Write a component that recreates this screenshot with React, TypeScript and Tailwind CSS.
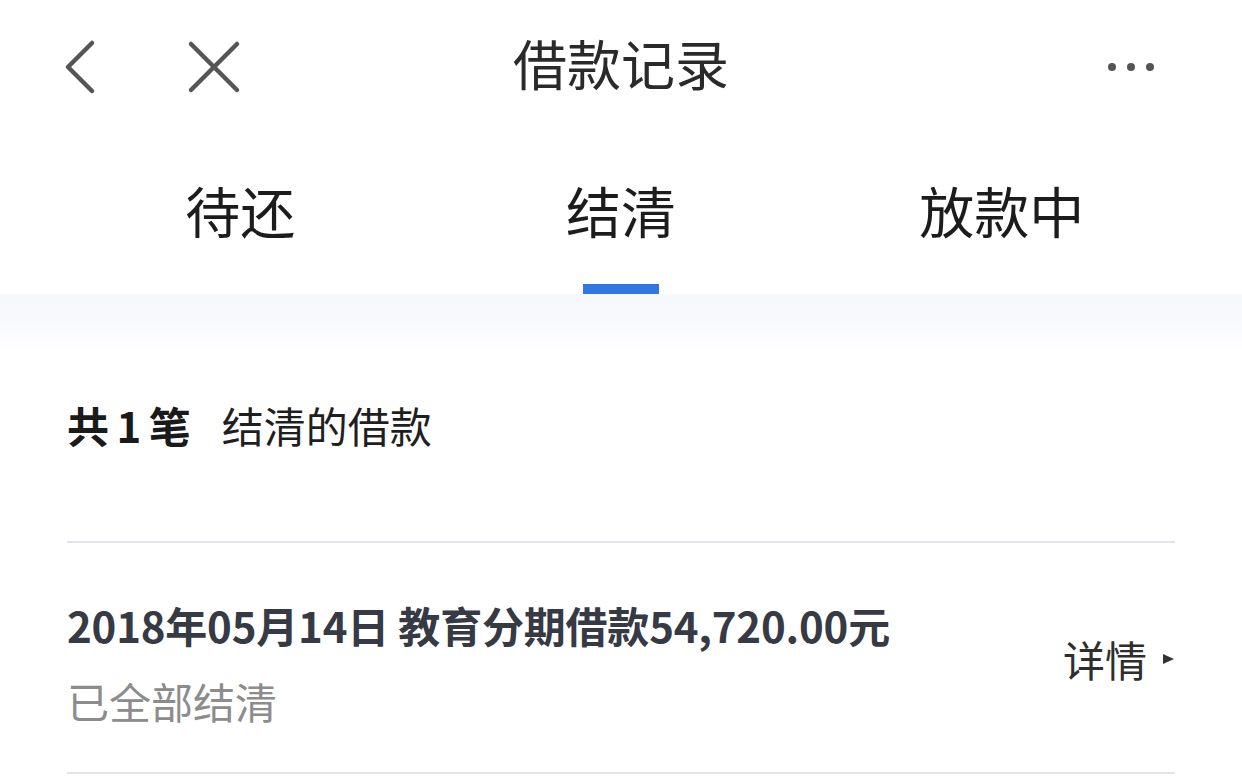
const font = { fontFamily: '"Noto Sans CJK SC", "Noto Sans", sans-serif' };

function BackIcon() {
  return (
    <svg width="40" height="60" viewBox="0 0 40 60" fill="none">
      <path d="M32 6 L8 30 L32 54" stroke="#555" strokeWidth="4.5" strokeLinecap="round" strokeLinejoin="round" />
    </svg>
  );
}

function CloseIcon() {
  return (
    <svg width="56" height="56" viewBox="0 0 56 56" fill="none">
      <path d="M5 5 L51 51 M51 5 L5 51" stroke="#555" strokeWidth="4.5" strokeLinecap="round" />
    </svg>
  );
}

const tabs = ["待还", "结清", "放款中"];

export default function App() {
  return (
    <div className="w-[1242px] h-[776px] overflow-hidden bg-white" style={font}>
      {/* header */}
      <div className="grid h-[134px] grid-cols-[1fr_auto_1fr] items-center">
        <div className="flex items-center pl-[60px]">
          <BackIcon />
          <div className="ml-[86px]">
            <CloseIcon />
          </div>
        </div>
        <div className="-mt-[8px] text-[54px] leading-none text-[#2a2a2a]">借款记录</div>
        <div className="flex items-center justify-end gap-[11px] pr-[88px]">
          <span className="size-[8px] rounded-full bg-[#555]" />
          <span className="size-[8px] rounded-full bg-[#555]" />
          <span className="size-[8px] rounded-full bg-[#555]" />
        </div>
      </div>

      {/* tabs */}
      <div className="grid h-[160px] grid-cols-3 px-[50px]">
        {tabs.map((t, i) => (
          <div key={t} className="flex h-full flex-col items-center">
            <div className="pt-[48px] text-[55px] leading-none text-[#1c1c1c]">{t}</div>
            {i === 1 && <div className="mt-auto h-[10px] w-[76px] bg-[#3177e3]" />}
          </div>
        ))}
      </div>

      {/* summary */}
      <div className="h-[247px] bg-[linear-gradient(to_bottom,#f6f8fc,#f8f9fd_30px,#ffffff_60px)] px-[67px] pt-[110px]">
        <div className="flex items-center text-[42px] leading-none">
          <span className="font-bold tracking-[-1px] text-[#1a1a1a]">共 1 笔</span>
          <span className="ml-[32px] text-[#1f1f1f]">结清的借款</span>
        </div>
      </div>

      <div className="mx-[67px] h-[2px] bg-[#e1e4e9]" />

      {/* record row */}
      <div className="flex h-[229px] items-start justify-between px-[67px]">
        <div className="flex flex-col pt-[61px]">
          <div className="text-[42px] font-bold leading-none tracking-[-0.2px] text-[#353a45]">
            2018年05月14日 教育分期借款54,720.00元
          </div>
          <div className="mt-[34px] text-[42px] leading-none text-[#8c8c8c]">已全部结清</div>
        </div>
        <div className="flex items-center pt-[95px]">
          <span className="text-[42px] leading-none text-[#2e2e2e]">详情</span>
          <svg className="ml-[14px]" width="14" height="14" viewBox="0 0 14 14">
            <path d="M2 2 L13 7 L2 12 Z" fill="#333" />
          </svg>
        </div>
      </div>

      <div className="mx-[67px] h-[2px] bg-[#e1e4e9]" />
    </div>
  );
}
